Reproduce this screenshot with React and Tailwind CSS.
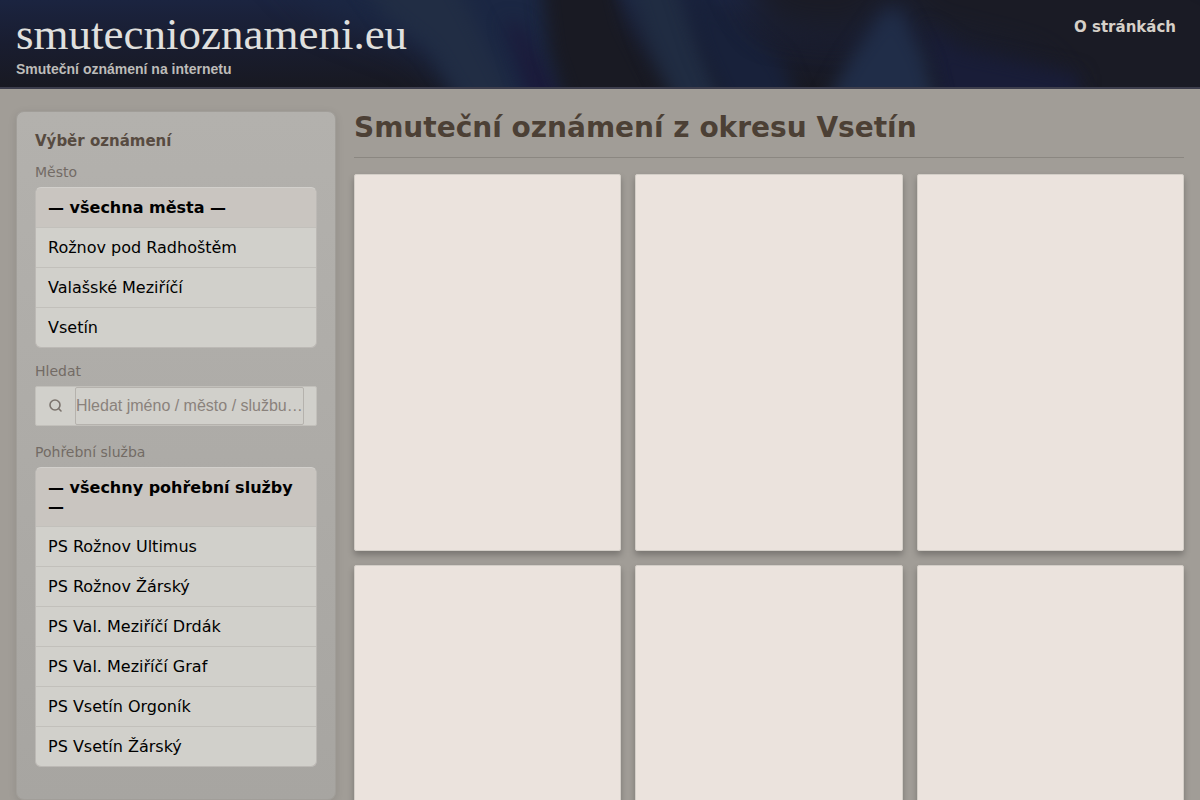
import React, { useState } from "react";

const CITIES = ["Rožnov pod Radhoštěm", "Valašské Meziříčí", "Vsetín"];

const SERVICES = [
  "PS Rožnov Ultimus",
  "PS Rožnov Žárský",
  "PS Val. Meziříčí Drdák",
  "PS Val. Meziříčí Graf",
  "PS Vsetín Orgoník",
  "PS Vsetín Žárský",
];

const NOTICES = [1, 2, 3, 4, 5, 6];

// soft blue folds behind the header
function HeaderBackdrop() {
  return (
    <svg className="absolute inset-0 h-full w-full" viewBox="0 0 1200 88" preserveAspectRatio="none" aria-hidden="true">
      <defs>
        <filter id="soft" x="-100" y="-100" width="1400" height="300" filterUnits="userSpaceOnUse" colorInterpolationFilters="sRGB">
          <feGaussianBlur stdDeviation="18" />
        </filter>
        <filter id="edge" x="-100" y="-100" width="1400" height="300" filterUnits="userSpaceOnUse" colorInterpolationFilters="sRGB">
          <feGaussianBlur stdDeviation="9" />
        </filter>
        <linearGradient id="shade" x1="0" y1="0" x2="0" y2="1">
          <stop offset="0" stopColor="#1b2440" />
          <stop offset="0.5" stopColor="#191d30" />
          <stop offset="1" stopColor="#181922" />
        </linearGradient>
      </defs>
      <rect width="1200" height="88" fill="url(#shade)" />
      <path d="M260 -60 L560 -60 L570 150 L500 150 L420 50 L330 15 Z" fill="#1b2743" filter="url(#soft)" />
      <path d="M330 -60 L430 -60 L470 10 L540 150 L490 150 L430 50 L385 15 Z" fill="#212d44" filter="url(#edge)" />
      <path d="M505 20 L520 25 L590 150 L545 150 Z" fill="#1b1a3a" filter="url(#edge)" />
      <path d="M536 -60 L605 -60 L625 25 L690 150 L585 150 L550 50 Z" fill="#191a23" filter="url(#edge)" />
      <path d="M612 -60 L665 -60 L705 50 L745 150 L695 150 L645 40 Z" fill="#202c42" filter="url(#edge)" />
      <path d="M665 -60 L700 -10 L780 60 L820 150 L745 150 L700 50 Z" fill="#18213a" filter="url(#edge)" />
      <path d="M725 -60 L1300 -60 L1300 150 L1100 150 L1040 60 L920 30 L900 0 L850 35 L770 25 Z" fill="#1a1b25" filter="url(#soft)" />
      <path d="M925 25 L960 50 L1080 75 L1080 150 L950 150 Z" fill="#191d38" filter="url(#edge)" />
      <path d="M800 150 L850 60 L885 10 L900 10 L925 60 L950 150 Z" fill="#202d48" filter="url(#edge)" />
      <path d="M1130 -60 L1260 -60 L1260 14 Z" fill="#1c1c3a" filter="url(#edge)" />
    </svg>
  );
}

function SearchIcon() {
  return (
    <svg className="h-4 w-4" viewBox="0 0 16 16" fill="none" stroke="#7b736d" strokeWidth="1.6" strokeLinecap="round" aria-hidden="true">
      <circle cx="7" cy="7" r="5" />
      <path d="M10.8 10.8 L13 13" />
    </svg>
  );
}

function FilterList({ labelId, all, items, selected, onSelect }) {
  return (
    <ul aria-labelledby={labelId} className="overflow-hidden rounded-md border border-[#bcb9b5] border-t-[#d2d0cc] bg-[#d1d0cb]">
      {[all, ...items].map((item) => (
        <li key={item} className="border-b border-[#c2c0bb] last:border-b-0">
          <a
            href="#"
            onClick={(e) => {
              e.preventDefault();
              onSelect(item);
            }}
            className={
              item === selected
                ? "block bg-[#c9c5c0] px-3 py-2.5 text-[16px] leading-[19px] font-bold text-black"
                : "block px-3 py-2.5 text-[16px] leading-[19px] text-black"
            }
          >
            {item}
          </a>
        </li>
      ))}
    </ul>
  );
}

export default function App() {
  const [city, setCity] = useState("— všechna města —");
  const [service, setService] = useState("— všechny pohřební služby —");
  const [query, setQuery] = useState("");

  return (
    <div className="min-h-screen bg-[#a19d97] font-['DejaVu_Sans',sans-serif] text-[#4c4035]">
      <header className="relative flex items-start justify-between overflow-hidden border-b-2 border-[#3c3d4c] bg-[#191e30] px-4 pt-2.5 pb-2">
        <HeaderBackdrop />
        <div className="relative">
          <a href="#" className="block font-['Liberation_Serif',serif] text-[45px] leading-[48px] text-[#e0e0df]">
            smutecnioznameni.eu
          </a>
          <p className="mt-0.5 font-['Liberation_Sans',sans-serif] text-[14px] leading-[19px] font-bold text-[#bdbcb9]">
            Smuteční oznámení na internetu
          </p>
        </div>
        <nav className="relative px-2 py-1.5">
          <a href="#" className="block text-[15px] leading-[22px] font-bold text-[#d6d0c8]">O stránkách</a>
        </nav>
      </header>

      <div className="flex items-start gap-[18px] px-4 pt-[22px] pb-6">
        <aside className="w-80 shrink-0 rounded-lg border border-[#a19e99] bg-linear-to-b from-[#b3b1ad] to-[#a7a5a1] px-[18px] pt-[18px] pb-8 shadow-[0_2px_8px_rgba(0,0,0,0.1)]">
          <h2 className="text-[15px] leading-[22px] font-bold text-[#574b41]">Výběr oznámení</h2>

          <div className="mt-[11px]">
            <h3 id="city-label" className="mb-[5px] text-[14px] leading-[19px] text-[#736b65]">Město</h3>
            <FilterList labelId="city-label" all="— všechna města —" items={CITIES} selected={city} onSelect={setCity} />
          </div>

          <div className="mt-3.5">
            <label htmlFor="search" className="mb-[5px] block text-[14px] leading-[19px] text-[#736b65]">Hledat</label>
            <div className="flex h-10 rounded-xs border border-[#c2c0bb] bg-[#d1d0cb] pr-3">
              <span className="flex w-[39px] shrink-0 items-center justify-center">
                <SearchIcon />
              </span>
              <input
                id="search"
                type="text"
                value={query}
                onChange={(e) => setQuery(e.target.value)}
                placeholder="Hledat jméno / město / službu…"
                className="min-w-0 flex-1 rounded-xs border border-[#b5b2ad] bg-[#d1d0cb] font-['Liberation_Sans',sans-serif] text-[16px] text-black outline-none placeholder:text-[#8a827c]"
              />
            </div>
          </div>

          <div className="mt-[17px]">
            <h3 id="service-label" className="mb-[5px] text-[14px] leading-[19px] text-[#736b65]">Pohřební služba</h3>
            <FilterList labelId="service-label" all="— všechny pohřební služby —" items={SERVICES} selected={service} onSelect={setService} />
          </div>
        </aside>

        <main className="min-w-0 flex-1">
          <h1 className="border-b border-[#8b8781] pb-3 text-[28px] leading-[34px] font-bold">
            Smuteční oznámení z okresu Vsetín
          </h1>
          <div className="mt-4 grid grid-cols-3 gap-3.5">
            {NOTICES.map((id) => (
              <article
                key={id}
                className="rounded-xs border border-[#d3cec7] bg-[#ebe3dd] shadow-[0_4px_6px_rgba(0,0,0,0.25)]"
              >
                <div className="aspect-[210/297]" />
              </article>
            ))}
          </div>
        </main>
      </div>
    </div>
  );
}
